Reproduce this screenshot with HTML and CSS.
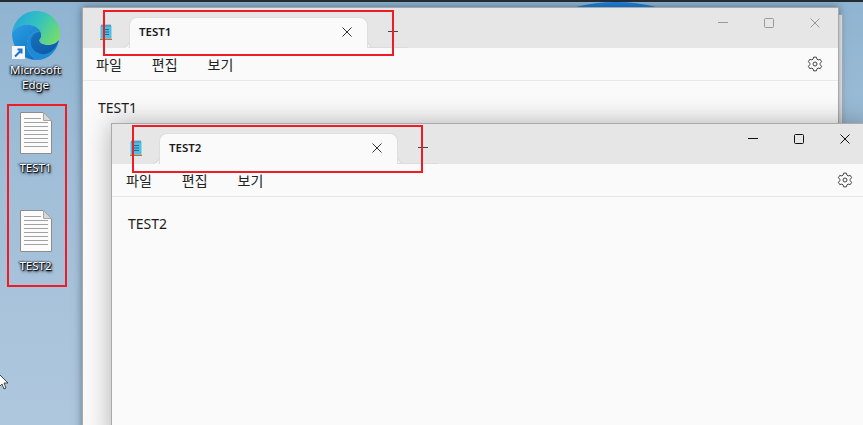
FILE: index.html
```html
<!DOCTYPE html>
<html lang="ko">
<head>
    <meta charset="UTF-8">
    <title>Notepad windows</title>
    <link rel="stylesheet" href="styles.css">
</head>
<body>

    <!-- Shared icons -->
    <svg class="icon-defs" width="0" height="0">
        <symbol id="notepad" viewBox="0 0 12 16">
            <rect x="0.5" y="1.5" width="11" height="13" rx="1" fill="#4fbfe6"/>
            <path d="M2 0.5v2M4 0.5v2M6 0.5v2M8 0.5v2M10 0.5v2" stroke="#2f5f78" stroke-width="1"/>
            <path d="M3 5.5h6M3 8h6M3 10.5h6" stroke="#1d6b90" stroke-width="1"/>
            <path d="M0 15.3h12" stroke="#a5682a" stroke-width="1.2"/>
        </symbol>
        <symbol id="close" viewBox="0 0 10 10">
            <path d="M0.5 0.5l9 9M9.5 0.5l-9 9" fill="none" stroke="currentColor" stroke-width="1"/>
        </symbol>
        <symbol id="gear" viewBox="0 0 16 16">
            <path d="M6.05 3.18L6.66 1.13H9.34L9.95 3.18L11.2 3.9L13.28 3.41L14.62 5.72L13.15 7.28V8.72L14.62 10.28L13.28 12.59L11.2 12.1L9.95 12.82L9.34 14.87H6.66L6.05 12.82L4.8 12.1L2.72 12.59L1.38 10.28L2.85 8.72V7.28L1.38 5.72L2.72 3.41L4.8 3.9Z" fill="none" stroke="#444" stroke-width="1" stroke-linejoin="round"/>
            <circle cx="8" cy="8" r="2" fill="none" stroke="#444" stroke-width="1"/>
        </symbol>
        <symbol id="doc" viewBox="0 0 32 42">
            <path d="M0.5 0.5H23.5L31.5 8.5V41.5H0.5Z" fill="#fbfbfb" stroke="#8d8d8d"/>
            <path d="M23.5 0.5V8.5H31.5Z" fill="#d6d6d6" stroke="#a5a5a5"/>
            <path d="M4 6.5H21M4 10.5H28M4 14.5H28M4 18.5H28M4 22.5H28M4 26.5H28M4 30.5H28M4 34.5H28" stroke="#a2a2a2"/>
        </symbol>
    </svg>

    <div class="desktop">
        <div class="top-strip"></div>
        <div class="wallpaper-arc"></div>

        <!-- Desktop icons -->
        <div class="desk-icon desk-edge">
            <svg class="edge-logo" width="48" height="49" viewBox="0 0 48 49">
                <defs>
                    <linearGradient id="edgeTop" x1="0" y1="0.2" x2="1" y2="0.7">
                        <stop offset="0" stop-color="#25a2e0"/>
                        <stop offset="0.5" stop-color="#35c4bc"/>
                        <stop offset="1" stop-color="#74dc6c"/>
                    </linearGradient>
                    <linearGradient id="edgeLeft" x1="0" y1="0" x2="0.7" y2="1">
                        <stop offset="0" stop-color="#2a9fe4"/>
                        <stop offset="1" stop-color="#1273c4"/>
                    </linearGradient>
                    <linearGradient id="edgeSwirl" x1="0" y1="0" x2="0.8" y2="1">
                        <stop offset="0" stop-color="#1a70ba"/>
                        <stop offset="1" stop-color="#0e5aa6"/>
                    </linearGradient>
                </defs>
                <path d="M0 22C2 9 12 0 24 0C38 0 48 10 48 23C48 30 43 34 36 34C31 34 27 32 27 29C29 27 30 24 28 21C25 15 18 13 12 14C6 15 2 18 0 22Z" fill="url(#edgeTop)"/>
                <path d="M0 22C2 18 6 15 12 14C18 13 25 15 28 20C21 20 15 26 15 33C15 40 19 46 25 49C10 49 0 37 0 22Z" fill="url(#edgeLeft)"/>
                <path d="M28 20C30 24 29 27 27 29C27 32 31 34 36 34C41 34 45 32 47 29C45 41 36 49 25 49C19 46 15 40 15 33C15 26 21 20 28 20Z" fill="#1c8ad6"/>
                <path d="M28 21C22 21 18 27 19 33C20 40 27 44 34 43C40 41 45 36 47 29C45 32 41 34 36 34C31 34 27 32 27 29C29 27 30 24 28 21Z" fill="url(#edgeSwirl)"/>
            </svg>
            <div class="shortcut">
                <svg width="13" height="13" viewBox="0 0 13 13">
                    <path d="M3 10.5L8.5 5M5.5 3.5H9.5V7.5" fill="none" stroke="#1f6fd0" stroke-width="2"/>
                </svg>
            </div>
            <span class="desk-label">Microsoft<br>Edge</span>
        </div>
        <div class="desk-icon desk-test1">
            <svg width="32" height="42"><use href="#doc"/></svg>
            <span class="desk-label">TEST1</span>
        </div>
        <div class="desk-icon desk-test2">
            <svg width="32" height="42"><use href="#doc"/></svg>
            <span class="desk-label">TEST2</span>
        </div>

        <div class="back-window"></div>

        <!-- Window 1 -->
        <div class="window window-one">
            <div class="titlebar">
                <svg class="app-icon" width="12" height="16"><use href="#notepad"/></svg>
                <div class="tab">
                    <span class="tab-title">TEST1</span>
                    <svg class="tab-close" width="10" height="10"><use href="#close"/></svg>
                </div>
                <div class="new-tab"></div>
                <div class="controls">
                    <div class="control"><span class="ctl-min"></span></div>
                    <div class="control"><span class="ctl-max"></span></div>
                    <div class="control"><svg width="10" height="10"><use href="#close"/></svg></div>
                </div>
            </div>
            <div class="menubar">
                <span class="menu-item">파일</span>
                <span class="menu-item">편집</span>
                <span class="menu-item">보기</span>
                <svg class="gear" width="16" height="16"><use href="#gear"/></svg>
            </div>
            <div class="editor">TEST1</div>
        </div>

        <!-- Window 2 -->
        <div class="window window-two">
            <div class="titlebar">
                <svg class="app-icon" width="12" height="16"><use href="#notepad"/></svg>
                <div class="tab">
                    <span class="tab-title">TEST2</span>
                    <svg class="tab-close" width="10" height="10"><use href="#close"/></svg>
                </div>
                <div class="new-tab"></div>
                <div class="controls">
                    <div class="control"><span class="ctl-min"></span></div>
                    <div class="control"><span class="ctl-max"></span></div>
                    <div class="control"><svg width="10" height="10"><use href="#close"/></svg></div>
                </div>
            </div>
            <div class="menubar">
                <span class="menu-item">파일</span>
                <span class="menu-item">편집</span>
                <span class="menu-item">보기</span>
                <svg class="gear" width="16" height="16"><use href="#gear"/></svg>
            </div>
            <div class="editor">TEST2</div>
        </div>

        <!-- Red annotation boxes -->
        <div class="mark mark-icons"></div>
        <div class="mark mark-tab1"></div>
        <div class="mark mark-tab2"></div>

        <!-- Mouse cursor -->
        <svg class="cursor" width="10" height="17" viewBox="0 0 10 17">
            <path d="M0 0L9 9H5L7 14L5 15L3 10L0 13Z" fill="#fff" stroke="#222" stroke-width="0.8"/>
        </svg>
    </div>

</body>
</html>
```

FILE: styles.css
```css
body {
    margin: 0;
    font-family: "Noto Sans", "Noto Sans CJK KR", sans-serif;
    overflow: hidden;
}

.icon-defs {
    position: absolute;
}

/* Desktop */
.desktop {
    position: relative;
    width: 863px;
    height: 425px;
    overflow: hidden;
    background: linear-gradient(180deg, #8fb4d1 0%, #a2bfd8 45%, #aec7dd 100%);
}

.top-strip {
    position: absolute;
    left: 0;
    top: 0;
    width: 100%;
    height: 2px;
    background-color: #262b31;
}

.wallpaper-arc {
    position: absolute;
    left: 562px;
    top: 2px;
    width: 108px;
    height: 30px;
    border-radius: 50%;
    background-color: #1a7fdd;
}

.desk-icon {
    position: absolute;
    width: 71px;
    display: flex;
    flex-direction: column;
    align-items: center;
}

.desk-edge {
    left: 0;
    top: 11px;
}

.desk-test1 {
    left: 0;
    top: 112px;
}

.desk-test2 {
    left: 0;
    top: 210px;
}

.desk-label {
    color: #fff;
    font-size: 11.5px;
    line-height: 15px;
    text-align: center;
    text-shadow: 1px 1px 1px #000, 0 0 2px #111, -1px 0 2px #14315c, 1px 2px 3px #222;
    margin-top: 6px;
}

.desk-edge .desk-label {
    margin-top: 2px;
}

.shortcut {
    position: absolute;
    left: 12px;
    top: 35px;
    width: 13px;
    height: 13px;
    background-color: #f4f6f8;
}

.shortcut svg {
    display: block;
}

/* Windows */
.back-window {
    position: absolute;
    left: 90px;
    top: 14px;
    width: 753px;
    height: 420px;
    background-color: #f6f6f6;
    border: 1px solid #b5b5b5;
    box-sizing: border-box;
}

.window {
    position: absolute;
    display: flex;
    flex-direction: column;
    box-sizing: border-box;
    background-color: #fafafa;
    border: 1px solid #a9a9a9;
}

.window-one {
    left: 82px;
    top: 7px;
    width: 757px;
    height: 430px;
    box-shadow: 0 0 8px rgba(30, 50, 70, 0.55);
    color: #999;
}

.window-two {
    left: 111px;
    top: 123px;
    width: 758px;
    height: 320px;
    box-shadow: 0 0 24px rgba(0, 0, 0, 0.3);
    color: #111;
}

.titlebar {
    display: flex;
    align-items: flex-end;
    height: 40px;
    background-color: #e6e6e6;
    position: relative;
}

.app-icon {
    align-self: center;
    margin: 7px 0 0 17px;
}

.window-two .app-icon {
    margin-left: 18px;
}

.tab {
    position: relative;
    display: flex;
    align-items: center;
    justify-content: space-between;
    box-sizing: border-box;
    width: 239px;
    height: 31px;
    margin-left: 17px;
    padding: 0 15px 3px 9px;
    background-color: #fafafa;
    border: 1px solid #dedede;
    border-bottom: none;
    border-radius: 8px 8px 0 0;
    color: #1a1a1a;
}

/* curved feet where the tab meets the strip */
.tab::before,
.tab::after {
    content: "";
    position: absolute;
    bottom: 0;
    width: 6px;
    height: 6px;
    box-sizing: border-box;
    background-color: #e6e6e6;
    border-bottom: 1px solid #dcdcdc;
    box-shadow: 0 3px 0 #fafafa;
}

.tab::before {
    left: -7px;
    border-right: 1px solid #dcdcdc;
    border-bottom-right-radius: 6px;
}

.tab::after {
    right: -7px;
    border-left: 1px solid #dcdcdc;
    border-bottom-left-radius: 6px;
}

.tab-title {
    font-size: 11.5px;
    font-weight: 600;
}

.tab-close {
    color: #333;
}

.new-tab {
    position: relative;
    width: 40px;
    height: 31px;
    border-bottom: 1px solid #dcdcdc;
    box-sizing: border-box;
}

.new-tab::after {
    content: "";
    position: absolute;
    left: 20px;
    top: 14px;
    width: 10px;
    height: 1px;
    background-color: #444;
}

.controls {
    display: flex;
    margin-left: auto;
    align-self: flex-start;
}

.control {
    display: flex;
    align-items: center;
    justify-content: center;
    width: 46px;
    height: 28px;
    padding-top: 1px;
    box-sizing: border-box;
}

.ctl-min {
    width: 10px;
    height: 1px;
    background-color: currentColor;
}

.ctl-max {
    width: 8px;
    height: 8px;
    border: 1px solid currentColor;
    border-radius: 1.5px;
}

.menubar {
    display: flex;
    align-items: center;
    height: 33px;
    padding: 0 23px 1px 14px;
    box-sizing: border-box;
    background-color: #fafafa;
    border-bottom: 1px solid #e8e8e8;
    color: #222;
}

.window-one .menubar {
    padding-left: 13px;
}

.menu-item {
    font-size: 14px;
    margin-right: 30px;
}

.gear {
    margin-left: auto;
    margin-right: -8px;
}

.editor {
    padding: 17px 16px;
    font-size: 14px;
    line-height: 20px;
    color: #1c1c1c;
}

.window-one .editor {
    padding-left: 15px;
}

/* Red annotation boxes */
.mark {
    position: absolute;
    box-sizing: border-box;
    border: 2px solid #ee1c25;
}

.mark-icons {
    left: 7px;
    top: 104px;
    width: 60px;
    height: 183px;
}

.mark-tab1 {
    left: 103px;
    top: 10px;
    width: 291px;
    height: 46px;
}

.mark-tab2 {
    left: 132px;
    top: 125px;
    width: 291px;
    height: 48px;
}

.cursor {
    position: absolute;
    left: -1px;
    top: 374px;
}
```
